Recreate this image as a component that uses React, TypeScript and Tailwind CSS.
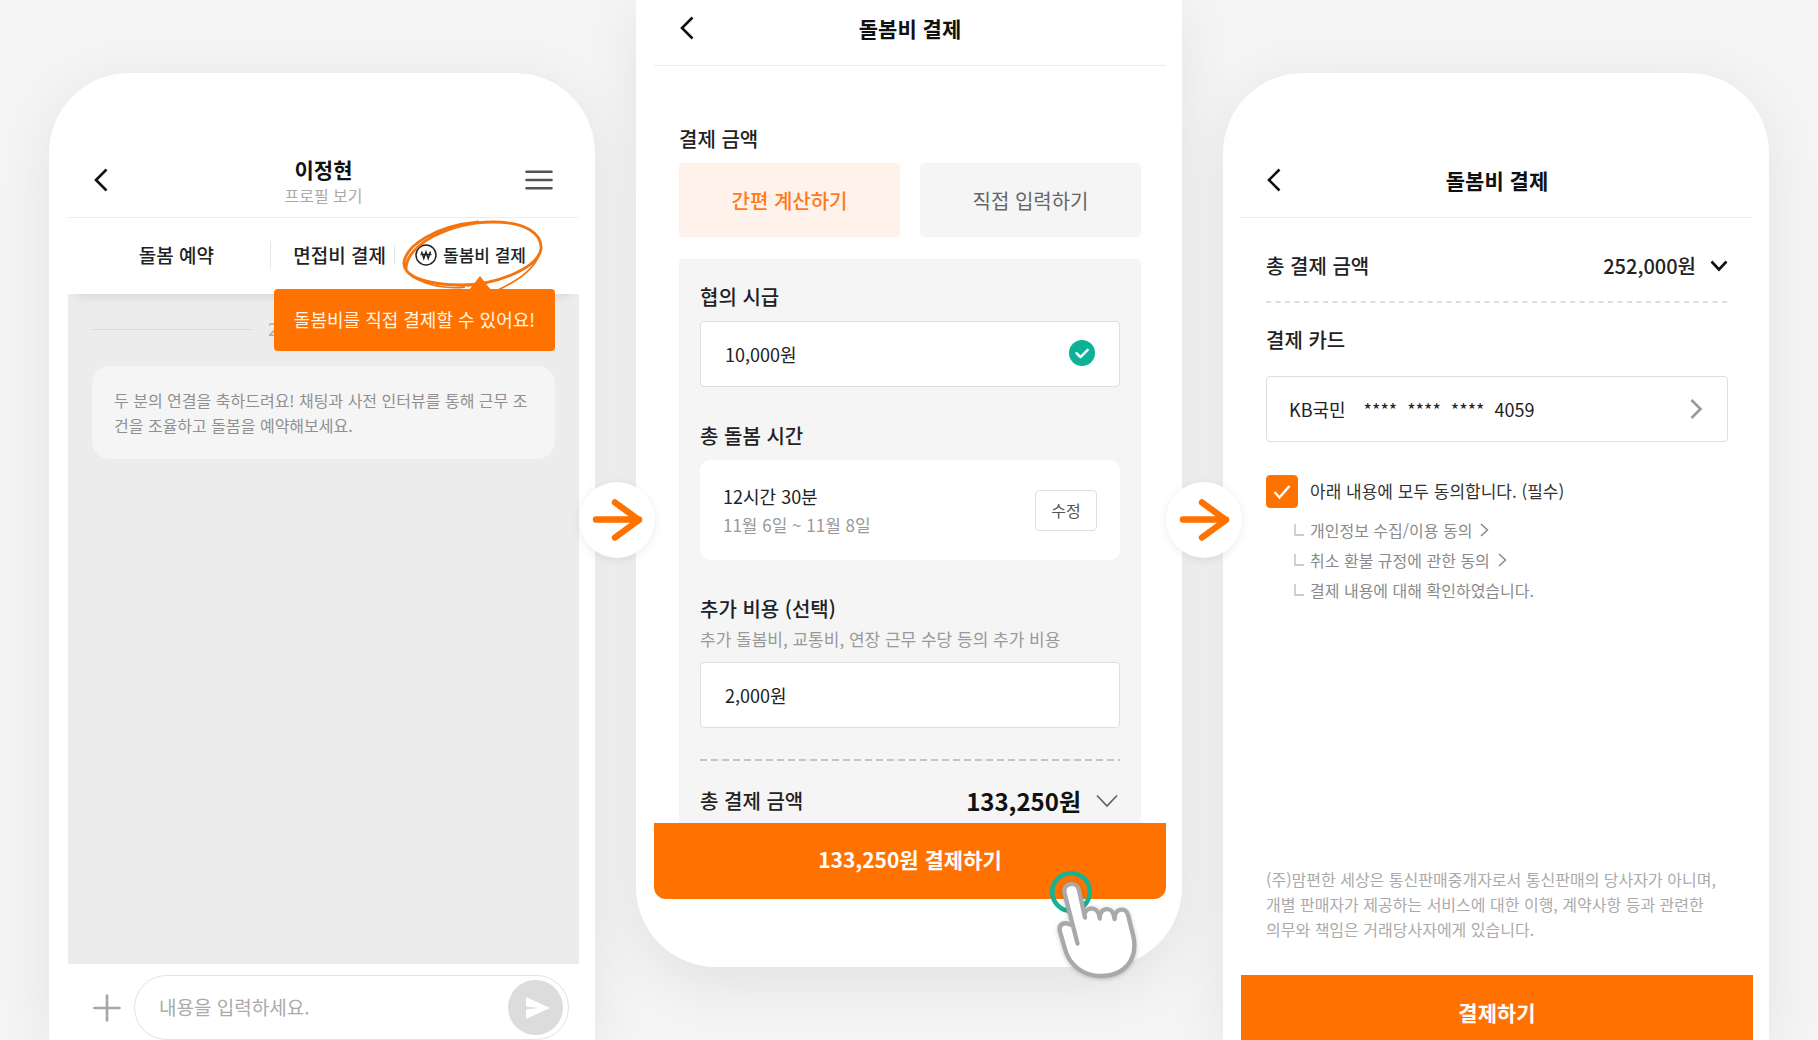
import React from "react";

const agreements = [
  { label: "개인정보 수집/이용 동의", href: "#privacy" },
  { label: "취소 환불 규정에 관한 동의", href: "#refund" },
  { label: "결제 내용에 대해 확인하였습니다." },
];

function BackButton() {
  return (
    <button type="button" aria-label="뒤로" className="w-10 h-10 flex items-center">
      <svg width="14" height="24" viewBox="0 0 14 24" fill="none">
        <path d="M12.5 1.5 2 12l10.5 10.5" stroke="#111" strokeWidth="2.6" />
      </svg>
    </button>
  );
}

function ScreenHeader({ title }: { title: string }) {
  return (
    <header className="h-[75px] shrink-0 border-b border-[#ededed] grid grid-cols-[40px_1fr_40px] items-center px-[26px]">
      <BackButton />
      <h2 className="text-center text-[21px] leading-8 font-bold text-[#111]">
        {title}
      </h2>
    </header>
  );
}

function StepArrow() {
  return (
    <div className="w-[76px] h-[76px] rounded-full bg-white shadow-[0_2px_10px_rgba(0,0,0,0.08)] flex items-center justify-center pl-0.5">
      <svg width="52" height="44" viewBox="0 0 52 44" fill="none">
        <path
          d="M4 21.5h43M23 4.5l24 17.5-24 17.5"
          stroke="#ff7200"
          strokeWidth="6.4"
          strokeLinecap="round"
          strokeLinejoin="round"
        />
      </svg>
    </div>
  );
}

function TapHand() {
  return (
    <svg width="88" height="112" viewBox="0 0 88 112" fill="none" className="overflow-visible">
      <circle cx="19" cy="22" r="18.8" stroke="#17b292" strokeWidth="4.6" />
      <g className="drop-shadow-[0_1px_2px_rgba(0,0,0,0.2)]">
        <path
          d="M18 54 12.5 23C11 12 25 11 27 20L33 47C34 37 45 36 48 44C50 37 60 37 63 45C65 38 74 38 76 45L82 70C85 90 72 106 49 106C30 106 17 94 13 79L8 61C6 53 14 51 18 54Z"
          fill="#fff"
        />
        <path
          d="M25.5 73.5 12.5 23C10.5 12 25 11 27 20L33 47.5L32.5 45C33.5 36.5 44.5 36.5 46.8 44L47.8 48.5C48 36.5 59.5 37 61.5 44.5L62.6 49C62.6 37.5 74 37 76 45L81.5 67C86 90 72 106 49 106C30 106 17 94 13 79L8 61.5C6 53 13.5 52 18 54.5"
          stroke="#a9a9a9"
          strokeWidth="4.4"
          strokeLinecap="round"
          strokeLinejoin="round"
        />
      </g>
    </svg>
  );
}

function ChatScreen() {
  return (
    <section className="mt-[73px] bg-white rounded-t-[80px] pl-[19px] pr-4 flex flex-col shadow-[0_10px_60px_rgba(0,0,0,0.08)]">
      <header className="mt-[69px] h-[76px] shrink-0 border-b border-[#ededed] grid grid-cols-[40px_1fr_40px] items-center px-[26px]">
        <BackButton />
        <div className="pt-0.5 text-center">
          <h2 className="text-[21px] leading-7 font-bold text-[#111]">이정현</h2>
          <a href="#profile" className="block text-base leading-6 text-[#aaa]">
            프로필 보기
          </a>
        </div>
        <button type="button" aria-label="메뉴" className="w-10 h-10 flex items-center justify-end">
          <svg width="28" height="20" viewBox="0 0 28 20" stroke="#555" strokeWidth="2.6" strokeLinecap="round">
            <path d="M1.5 1.8h25M1.5 10h25M1.5 18.2h25" />
          </svg>
        </button>
      </header>

      <nav className="relative z-10 h-[76px] shrink-0 bg-white pb-0.5 flex items-center shadow-[0_12px_10px_-10px_rgba(0,0,0,0.1)]">
        <button type="button" className="w-[202px] pr-14 text-right text-[19px] leading-7 font-medium text-[#222]">
          돌봄 예약
        </button>
        <span className="w-px h-7 bg-[#e5e5e5]" />
        <button type="button" className="w-[123px] pr-2 text-right text-[19px] leading-7 font-medium text-[#222]">
          면접비 결제
        </button>
        <span className="w-px h-5 bg-[#e5e5e5]" />
        <div className="relative pl-5">
          <button type="button" className="flex items-center gap-1.5 text-[17px] leading-7 font-medium text-[#222]">
            <svg width="22" height="22" viewBox="0 0 22 22" fill="none" stroke="#222" strokeWidth="1.5">
              <circle cx="11" cy="11" r="10" />
              <path d="M6.5 7.5 8.8 14.5 11 8l2.200 6.500L15.500 7.500M5.500 10.500h11" />
            </svg>
            돌봄비 결제
          </button>
          {/* Hand-drawn highlight */}
          <svg width="146" height="78" viewBox="0 0 146 78" fill="none" className="absolute left-[6px] -top-[23px] pointer-events-none">
            <path
              d="M5 51C5 26 50 4 92 4C124 4 141 15 140 31C137 49 98 67 60 67C27 67 2 59 3 44C6 27 34 8 78 4"
              stroke="#f4750f"
              strokeWidth="2.8"
            />
            <path
              d="M4 50C8 61 34 72 64 69M8 55C18 63 38 67 60 67M140 31C136 50 118 62 97 72M137 40C124 54 94 65 66 68"
              stroke="#f4750f"
              strokeWidth="1.8"
            />
          </svg>
          <div
            role="tooltip"
            className="absolute top-[48px] -left-[121px] w-[281px] h-[62px] rounded bg-[#ff7200] pb-0.5 flex items-center justify-center whitespace-nowrap text-lg text-[#fff6e6]"
          >
            <svg width="22" height="14" viewBox="0 0 22 14" className="absolute -top-[13px] left-[195px]">
              <path d="M11 0 22 14H0z" fill="#ff7200" />
            </svg>
            돌봄비를 직접 결제할 수 있어요!
          </div>
        </div>
      </nav>

      <div className="flex-1 bg-[#ececec] px-6 pt-[23px]">
        <div className="flex items-center gap-4 text-[17px] leading-6 text-[#aaa]">
          <span className="w-[160px] h-px bg-[#d9d9d9]" />2
        </div>
        <p className="mt-[25px] rounded-[18px] bg-[#f5f5f5] pl-[22px] pr-4 pt-[22px] pb-[21px] text-base leading-[25px] text-[#909090] break-all">
          두 분의 연결을 축하드려요! 채팅과 사전 인터뷰를 통해 근무 조건을 조율하고 돌봄을 예약해보세요.
        </p>
      </div>

      <form className="shrink-0 pt-[11px] pl-[25px] pr-[10px] flex items-center gap-[13px]">
        <button type="button" aria-label="첨부">
          <svg width="28" height="28" viewBox="0 0 28 28" stroke="#a6a6a6" strokeWidth="2.6" strokeLinecap="round">
            <path d="M1.5 14h25M14 1.5v25" />
          </svg>
        </button>
        <div className="flex-1 h-[65px] rounded-full border border-[#e2e2e2] pl-6 pr-[5px] flex items-center">
          <input
            type="text"
            aria-label="메시지"
            placeholder="내용을 입력하세요."
            className="flex-1 min-w-0 outline-none text-[19px] text-[#111] placeholder:text-[#aaa]"
          />
          <button type="submit" aria-label="보내기" className="w-[55px] h-[55px] rounded-full bg-[#dcdcdc] flex items-center justify-center">
            <svg width="26" height="24" viewBox="0 0 26 24" fill="#fff" className="ml-1">
              <path d="M1 1 25 12 1 23V13.5L14 12 1 10.5z" />
            </svg>
          </button>
        </div>
      </form>
    </section>
  );
}

function CalculatorScreen() {
  return (
    <section className="relative z-10 bg-white rounded-b-[80px] pl-[18px] pr-4 pb-[68px] shadow-[0_20px_60px_rgba(0,0,0,0.08)]">
      <div className="-mt-[9px]">
        <ScreenHeader title="돌봄비 결제" />
      </div>

      <div className="px-[25px]">
        <h3 className="pt-[59px] text-xl leading-7 font-medium text-[#222]">결제 금액</h3>
        <div className="mt-[10px] grid grid-cols-2 gap-5">
          <button type="button" className="h-[74px] pt-0.5 rounded bg-[#fff2ea] text-xl font-medium text-[#ff7a1a]">
            간편 계산하기
          </button>
          <button type="button" className="h-[74px] pt-0.5 rounded bg-[#f5f5f5] text-xl text-[#666]">
            직접 입력하기
          </button>
        </div>

        <div className="mt-[22px] rounded-t bg-[#f5f5f5] px-[21px] pt-6">
          <label htmlFor="wage" className="block text-xl leading-7 font-medium text-[#222]">
            협의 시급
          </label>
          <div className="relative mt-[10px]">
            <input
              id="wage"
              type="text"
              defaultValue="10,000원"
              className="block w-full h-[66px] rounded border border-[#dedede] bg-white px-6 text-lg text-[#222]"
            />
            <svg width="26" height="26" viewBox="0 0 26 26" fill="none" className="absolute right-[25px] top-[19px]">
              <circle cx="13" cy="13" r="13" fill="#0bb297" />
              <path d="m7.5 13.2 4 4 7.2-7.4" stroke="#fff" strokeWidth="2.4" strokeLinecap="round" strokeLinejoin="round" />
            </svg>
          </div>

          <h3 className="mt-[35px] text-xl leading-7 font-medium text-[#222]">총 돌봄 시간</h3>
          <div className="mt-[10px] h-[100px] rounded-[10px] bg-white px-[23px] flex items-center justify-between">
            <div>
              <p className="text-lg leading-[30px] text-[#222]">12시간 30분</p>
              <p className="text-[17px] leading-7 text-[#999]">11월 6일 ~ 11월 8일</p>
            </div>
            <button type="button" className="w-[62px] h-[41px] rounded border border-[#dedede] text-base text-[#555]">
              수정
            </button>
          </div>

          <label htmlFor="extra" className="mt-[35px] block text-xl leading-7 font-medium text-[#222]">
            추가 비용 (선택)
          </label>
          <p className="mt-0.5 text-[17px] leading-7 text-[#999]">
            추가 돌봄비, 교통비, 연장 근무 수당 등의 추가 비용
          </p>
          <input
            id="extra"
            type="text"
            defaultValue="2,000원"
            className="mt-[9px] block w-full h-[66px] rounded border border-[#dedede] bg-white px-6 text-lg text-[#222]"
          />

          <svg width="100%" height="2" className="mt-[31px] block">
            <line x1="0" y1="1" x2="100%" y2="1" stroke="#c4c4c4" strokeWidth="2" strokeDasharray="7 4" />
          </svg>
          <div className="h-[62px] pb-[3px] pt-5 flex items-center justify-between">
            <span className="text-xl leading-9 font-medium text-[#222]">총 결제 금액</span>
            <span className="flex items-center gap-[15px] text-2xl leading-9 font-bold text-[#111]">
              133,250원
              <svg width="22" height="14" viewBox="0 0 22 14" fill="none" className="mr-0.5">
                <path d="m1 1.5 10 10.5L21 1.5" stroke="#666" strokeWidth="1.8" />
              </svg>
            </span>
          </div>
        </div>
      </div>

      <div className="relative">
        <button type="button" className="block w-full h-[76px] pb-0.5 rounded-b-xl bg-[#ff7200] text-[21px] font-bold text-white">
          133,250원 결제하기
        </button>
        <div className="absolute right-[26px] top-[47px] pointer-events-none">
          <TapHand />
        </div>
      </div>
    </section>
  );
}

function PaymentScreen() {
  return (
    <section className="mt-[73px] bg-white rounded-t-[80px] pl-[18px] pr-4 flex flex-col shadow-[0_10px_60px_rgba(0,0,0,0.08)]">
      <div className="pt-[70px]">
        <ScreenHeader title="돌봄비 결제" />
      </div>

      <div className="flex-1 px-[25px] flex flex-col">
        <div className="pt-[34px] flex items-center justify-between text-xl leading-7 font-medium text-[#222]">
          <span>총 결제 금액</span>
          <span className="flex items-center gap-[14px]">
            252,000원
            <svg width="18" height="12" viewBox="0 0 18 12" fill="none">
              <path d="m1.5 1.5 7.5 8 7.5-8" stroke="#111" strokeWidth="2.6" />
            </svg>
          </span>
        </div>
        <svg width="100%" height="2" className="mt-[21px] block">
          <line x1="0" y1="1" x2="100%" y2="1" stroke="#dedede" strokeWidth="2" strokeDasharray="5 4.5" />
        </svg>

        <h3 className="mt-[23px] text-xl leading-7 font-medium text-[#222]">결제 카드</h3>
        <button type="button" className="mt-[22px] h-[66px] rounded border border-[#dedede] px-[22px] flex items-center text-lg text-[#222]">
          <span>KB국민</span>
          <span className="ml-[18px] flex gap-[10px]">
            <span>****</span>
            <span>****</span>
            <span>****</span>
            <span>4059</span>
          </span>
          <svg width="14" height="22" viewBox="0 0 14 22" fill="none" className="ml-auto mr-0.5">
            <path d="m2.5 2 9 9-9 9" stroke="#999" strokeWidth="2.6" />
          </svg>
        </button>

        <label className="mt-8 flex items-center gap-3 text-[17px] leading-[34px] text-[#333]">
          <span className="relative">
            <input
              type="checkbox"
              defaultChecked
              className="peer block appearance-none w-8 h-[33px] rounded bg-white border border-[#ddd] checked:bg-[#ff7200] checked:border-[#ff7200]"
            />
            <svg width="18" height="16" viewBox="0 0 18 16" fill="none" className="absolute left-[7px] top-[9px] hidden peer-checked:block">
              <path d="m1.5 8 5 5.5L16.5 2" stroke="#fff" strokeWidth="2.4" />
            </svg>
          </span>
          아래 내용에 모두 동의합니다. (필수)
        </label>
        <ul className="mt-[7px] pl-7 text-base leading-[30px] text-[#8a8a8a]">
          {agreements.map((item) => (
            <li key={item.label} className="flex items-center gap-[6px]">
              <svg width="10" height="12" viewBox="0 0 10 12" fill="none">
                <path d="M1 0v11h9" stroke="#ccc" strokeWidth="1.8" />
              </svg>
              {item.href ? (
                <a href={item.href} className="flex items-center gap-2">
                  {item.label}
                  <svg width="9" height="14" viewBox="0 0 9 14" fill="none">
                    <path d="m1 1 6.5 6L1 13" stroke="#888" strokeWidth="1.5" />
                  </svg>
                </a>
              ) : (
                <span>{item.label}</span>
              )}
            </li>
          ))}
        </ul>

        <p className="mt-auto pb-[33px] text-base leading-[25px] text-[#aaa]">
          (주)맘편한 세상은 통신판매중개자로서 통신판매의 당사자가 아니며,
          <br />
          개별 판매자가 제공하는 서비스에 대한 이행, 계약사항 등과 관련한
          <br />
          의무와 책임은 거래당사자에게 있습니다.
        </p>
      </div>

      <button type="button" className="-mb-3 shrink-0 h-[77px] pb-0.5 bg-[#ff7200] text-[21px] font-bold text-white">
        결제하기
      </button>
    </section>
  );
}

export default function App() {
  return (
    <main
      lang="ko"
      className="h-screen overflow-hidden bg-[#f5f5f5] px-[49px] grid grid-cols-3 gap-[41px] font-['Noto_Sans_CJK_KR',sans-serif]"
    >
      <ChatScreen />
      <div className="relative z-10">
        <CalculatorScreen />
        <div className="absolute z-20 -left-[57px] top-1/2 -translate-y-1/2">
          <StepArrow />
        </div>
        <div className="absolute z-20 -right-[60px] top-1/2 -translate-y-1/2">
          <StepArrow />
        </div>
      </div>
      <PaymentScreen />
    </main>
  );
}
